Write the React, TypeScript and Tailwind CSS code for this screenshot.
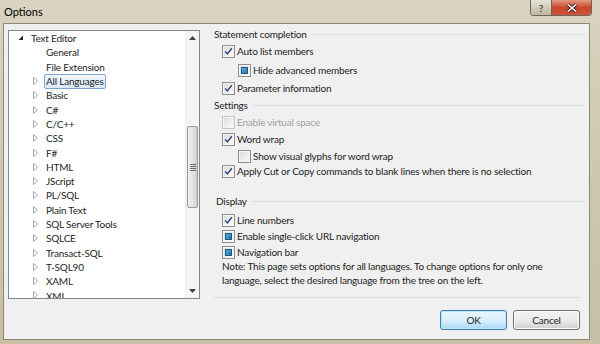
import React from 'react';

type TreeItem = { label: string; level: 0 | 1; expander?: 'open' | 'closed'; selected?: boolean };

const TREE: TreeItem[] = [
    { label: 'Text Editor', level: 0, expander: 'open' },
    { label: 'General', level: 1 },
    { label: 'File Extension', level: 1 },
    { label: 'All Languages', level: 1, expander: 'closed', selected: true },
    { label: 'Basic', level: 1, expander: 'closed' },
    { label: 'C#', level: 1, expander: 'closed' },
    { label: 'C/C++', level: 1, expander: 'closed' },
    { label: 'CSS', level: 1, expander: 'closed' },
    { label: 'F#', level: 1, expander: 'closed' },
    { label: 'HTML', level: 1, expander: 'closed' },
    { label: 'JScript', level: 1, expander: 'closed' },
    { label: 'PL/SQL', level: 1, expander: 'closed' },
    { label: 'Plain Text', level: 1, expander: 'closed' },
    { label: 'SQL Server Tools', level: 1, expander: 'closed' },
    { label: 'SQLCE', level: 1, expander: 'closed' },
    { label: 'Transact-SQL', level: 1, expander: 'closed' },
    { label: 'T-SQL90', level: 1, expander: 'closed' },
    { label: 'XAML', level: 1, expander: 'closed' },
    { label: 'XML', level: 1, expander: 'closed' },
];

type BoxState = 'checked' | 'unchecked' | 'mixed' | 'disabled';

// caixa de seleção no estilo Windows 7
const CheckBox = ({ state }: { state: BoxState }) => {
    const border = state === 'disabled' ? 'border-[#c4c4c4]' : 'border-[#8f8f8f]';
    return (
        <span className={`w-[13px] h-[13px] shrink-0 border ${border} bg-white flex items-center justify-center`}>
            <span className="w-[11px] h-[11px] border border-[#f4f4f4] bg-gradient-to-br from-[#dcdcdc] to-[#fbfbfb] flex items-center justify-center">
                {state === 'checked' && (
                    <svg width="9" height="9" viewBox="0 0 9 9">
                        <path d="M1.2 4.6 L3.4 6.9 L7.8 1.3" fill="none" stroke="#33467f" strokeWidth="1.5" />
                    </svg>
                )}
                {state === 'mixed' && (
                    <span className="w-[7px] h-[7px] border border-[#1d5a87] bg-gradient-to-br from-[#5fb4dd] to-[#1f70a6]"></span>
                )}
            </span>
        </span>
    );
};

const Option = ({ label, state, indent, className }: { label: string; state: BoxState; indent?: boolean; className: string }) => (
    <div className={`flex items-center h-[14px] gap-[2px] whitespace-nowrap ${indent ? 'pl-[24px]' : 'pl-[8px]'} ${className}`}>
        <CheckBox state={state} />
        <span className={state === 'disabled' ? 'text-[#a0a0a0]' : 'text-[#1e1e1e]'}>{label}</span>
    </div>
);

const Header = ({ label, className }: { label: string; className: string }) => (
    <div className={`flex items-center h-[14px] gap-[5px] ${className}`}>
        <span className="text-[#1e1e1e]">{label}</span>
        <div className="flex-1 h-px bg-[#d5dfe5]"></div>
    </div>
);

export default function App() {
    return (
        <div
            className="w-[600px] h-[344px] flex flex-col bg-gradient-to-b from-[#d9d3c0] via-[#cfc7af] to-[#c7bfa5] overflow-hidden text-[10px] leading-[14px] tracking-[-0.2px]"
            style={{ fontFamily: 'Lato, "Noto Sans", sans-serif' }}
        >
            {/* Barra de título */}
            <div className="h-[23px] flex items-start justify-between pl-[4px] pr-[8px]">
                <span className="mt-[5px] text-[11px] tracking-normal text-black">Options</span>
                <div className="flex h-[16px] rounded-b-[4px] overflow-hidden border border-t-0 border-[#6b6656]">
                    <div className="w-[21px] flex items-center justify-center bg-gradient-to-b from-[#e6e2d6] to-[#bdb6a0] border-r border-[#6b6656] text-[10px] font-bold text-[#4a4a4a]">?</div>
                    <div className="w-[39px] flex items-center justify-center bg-gradient-to-b from-[#e29a86] via-[#c7452b] to-[#c9563a]">
                        <svg width="12" height="10" viewBox="0 0 12 10">
                            <path d="M2 1.5 L10 8.5 M10 1.5 L2 8.5" stroke="#3a1a12" strokeWidth="3" />
                            <path d="M2 1.5 L10 8.5 M10 1.5 L2 8.5" stroke="#ffffff" strokeWidth="1.6" />
                        </svg>
                    </div>
                </div>
            </div>

            {/* Área cliente */}
            <div className="flex-1 ml-[3px] mr-[10px] mb-[4px] bg-[#f0f0f0] border border-[#8d8672] flex">
                {/* Árvore */}
                <div className="shrink-0 ml-[4px] mt-[6px] w-[192px] h-[269px] border border-[#828790] bg-white flex">
                    <div className="flex-1 overflow-hidden">
                        {TREE.map((item) => (
                            <div key={item.label} className={`h-[14.3px] flex items-center ${item.level === 0 ? 'pl-[9px]' : 'pl-[24px]'}`}>
                                <span className="w-[11px] h-[14px] flex items-center">
                                    {item.expander === 'open' && (
                                        <svg width="6" height="6" viewBox="0 0 6 6">
                                            <path d="M5 0.5 L5 5 L0.5 5 Z" fill="#262626" />
                                        </svg>
                                    )}
                                    {item.expander === 'closed' && (
                                        <svg width="5" height="8" viewBox="0 0 5 8">
                                            <path d="M0.5 0.5 L4.5 4 L0.5 7.5 Z" fill="none" stroke="#a6a6a6" strokeWidth="1" />
                                        </svg>
                                    )}
                                </span>
                                <span
                                    className={`px-[1px] h-[15px] flex items-center text-[#1e1e1e] whitespace-nowrap ${item.selected ? 'border border-[#7da2ce] rounded-[2px] bg-gradient-to-b from-[#f2f7fd] to-[#dce9f8]' : 'border border-transparent'}`}
                                >
                                    {item.label}
                                </span>
                            </div>
                        ))}
                    </div>
                    {/* Barra de rolagem */}
                    <div className="w-[14px] bg-[#f4f4f4] border-l border-[#ececec] flex flex-col items-center">
                        <div className="h-[14px] flex items-center justify-center">
                            <svg width="7" height="4" viewBox="0 0 7 4"><path d="M0 4 L3.5 0 L7 4 Z" fill="#404040" /></svg>
                        </div>
                        <div className="mt-[81px] w-[11px] h-[82px] rounded-[2px] border border-[#979797] bg-gradient-to-r from-[#f0f0f0] via-[#e4e4e4] to-[#cfcfcf] flex items-center justify-center">
                            <div className="flex flex-col gap-[1px]">
                                <div className="w-[6px] h-px bg-[#6b6b6b]"></div>
                                <div className="w-[6px] h-px bg-[#6b6b6b]"></div>
                                <div className="w-[6px] h-px bg-[#6b6b6b]"></div>
                                <div className="w-[6px] h-px bg-[#6b6b6b]"></div>
                            </div>
                        </div>
                        <div className="flex-1"></div>
                        <div className="h-[14px] flex items-center justify-center">
                            <svg width="7" height="4" viewBox="0 0 7 4"><path d="M0 0 L3.5 4 L7 0 Z" fill="#404040" /></svg>
                        </div>
                    </div>
                </div>

                {/* Opções */}
                <div className="flex-1 min-w-0 ml-[14px] mr-[4px] mt-[3px] flex flex-col">
                    <Header label="Statement completion" className="" />
                    <Option label="Auto list members" state="checked" className="mt-[3px]" />
                    <Option label="Hide advanced members" state="mixed" indent className="mt-[5px]" />
                    <Option label="Parameter information" state="checked" className="mt-[4px]" />
                    <Header label="Settings" className="mt-[3px]" />
                    <Option label="Enable virtual space" state="disabled" className="mt-[3px]" />
                    <Option label="Word wrap" state="checked" className="mt-[3px]" />
                    <Option label="Show visual glyphs for word wrap" state="unchecked" indent className="mt-[3px]" />
                    <Option label="Apply Cut or Copy commands to blank lines when there is no selection" state="checked" className="mt-[1px]" />
                    <Header label="Display" className="mt-[16px] pl-[2px]" />
                    <Option label="Line numbers" state="checked" className="mt-[5px]" />
                    <Option label="Enable single-click URL navigation" state="mixed" className="mt-[2px]" />
                    <Option label="Navigation bar" state="mixed" className="mt-[2px]" />
                    <p className="pl-[8px] text-[#1e1e1e] whitespace-nowrap">
                        Note: This page sets options for all languages. To change options for only one
                        <br />
                        language, select the desired language from the tree on the left.
                    </p>
                    <div className="mt-[10px] mr-[5px] h-px bg-[#d5dfe5]"></div>
                    <div className="mt-[12px] flex justify-end gap-[6px] pr-[5px]">
                        <button className="w-[67px] h-[20px] rounded-[3px] border border-[#3c7fb1] bg-gradient-to-b from-[#eaf6fd] via-[#d9f0fc] to-[#a7d9f5] shadow-[inset_0_0_0_1px_#bfe6f9] text-[#1e1e1e]">OK</button>
                        <button className="w-[67px] h-[20px] rounded-[3px] border border-[#707070] bg-gradient-to-b from-[#f2f2f2] via-[#ebebeb] to-[#cfcfcf] shadow-[inset_0_0_0_1px_#fcfcfc] text-[#1e1e1e]">Cancel</button>
                    </div>
                </div>
            </div>
        </div>
    );
}
